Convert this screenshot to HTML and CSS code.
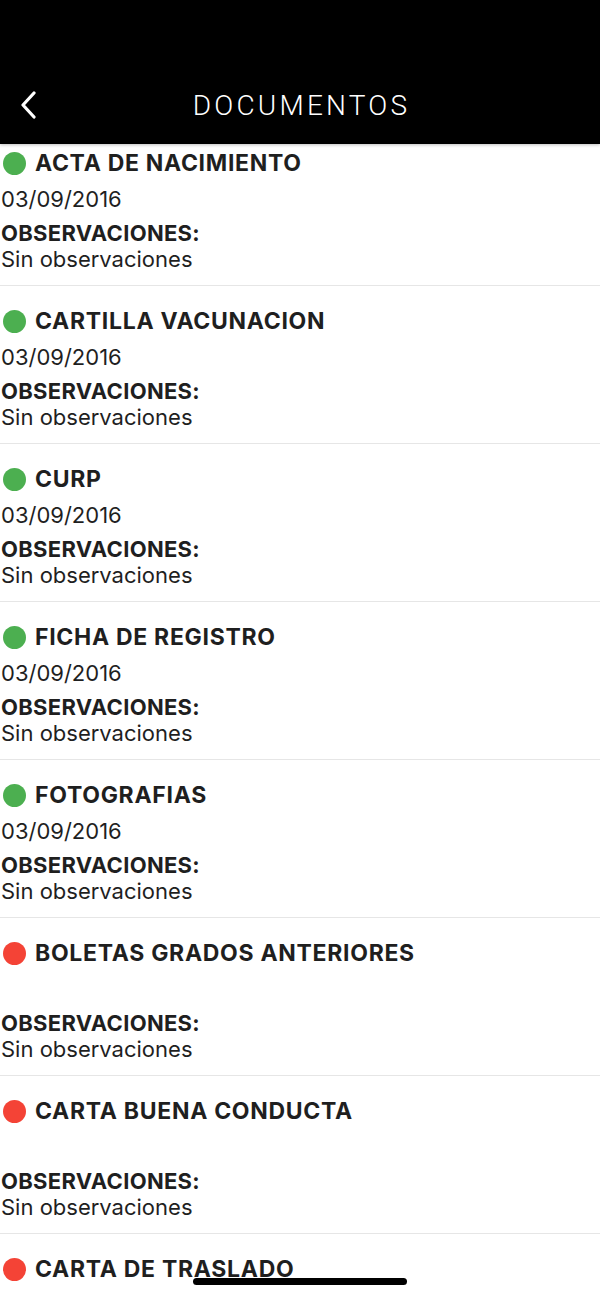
FILE: index.html
```html
<!DOCTYPE html>
<html lang="es">
<head>
    <meta charset="UTF-8">
    <meta name="viewport" content="width=device-width, initial-scale=1.0">
    <title>Documentos</title>
    <link rel="stylesheet" href="styles.css">
</head>
<body>
    <header class="topbar">
        <button class="back" aria-label="Regresar">
            <svg width="16" height="28" viewBox="0 0 16 28">
                <path d="M14 2 L3 14 L14 26" fill="none" stroke="#fff" stroke-width="3.2" stroke-linecap="round" stroke-linejoin="round"/>
            </svg>
        </button>
        <h1 class="title">DOCUMENTOS</h1>
    </header>

    <ul class="docs">
        <li class="doc">
            <div class="doc-name"><span class="dot ok"></span>ACTA DE NACIMIENTO</div>
            <div class="doc-date">03/09/2016</div>
            <div class="doc-label">OBSERVACIONES:</div>
            <div class="doc-obs">Sin observaciones</div>
        </li>
        <li class="doc">
            <div class="doc-name"><span class="dot ok"></span>CARTILLA VACUNACION</div>
            <div class="doc-date">03/09/2016</div>
            <div class="doc-label">OBSERVACIONES:</div>
            <div class="doc-obs">Sin observaciones</div>
        </li>
        <li class="doc">
            <div class="doc-name"><span class="dot ok"></span>CURP</div>
            <div class="doc-date">03/09/2016</div>
            <div class="doc-label">OBSERVACIONES:</div>
            <div class="doc-obs">Sin observaciones</div>
        </li>
        <li class="doc">
            <div class="doc-name"><span class="dot ok"></span>FICHA DE REGISTRO</div>
            <div class="doc-date">03/09/2016</div>
            <div class="doc-label">OBSERVACIONES:</div>
            <div class="doc-obs">Sin observaciones</div>
        </li>
        <li class="doc">
            <div class="doc-name"><span class="dot ok"></span>FOTOGRAFIAS</div>
            <div class="doc-date">03/09/2016</div>
            <div class="doc-label">OBSERVACIONES:</div>
            <div class="doc-obs">Sin observaciones</div>
        </li>
        <li class="doc">
            <div class="doc-name"><span class="dot missing"></span>BOLETAS GRADOS ANTERIORES</div>
            <div class="doc-date"></div>
            <div class="doc-label">OBSERVACIONES:</div>
            <div class="doc-obs">Sin observaciones</div>
        </li>
        <li class="doc">
            <div class="doc-name"><span class="dot missing"></span>CARTA BUENA CONDUCTA</div>
            <div class="doc-date"></div>
            <div class="doc-label">OBSERVACIONES:</div>
            <div class="doc-obs">Sin observaciones</div>
        </li>
        <li class="doc">
            <div class="doc-name"><span class="dot missing"></span>CARTA DE TRASLADO</div>
            <div class="doc-date"></div>
            <div class="doc-label">OBSERVACIONES:</div>
            <div class="doc-obs">Sin observaciones</div>
        </li>
    </ul>

    <div class="home-bar"></div>
</body>
</html>
```

FILE: styles.css
```css
body {
    margin: 0;
    height: 1298px;
    overflow: hidden;
    background-color: #fff;
    font-family: Inter, "Liberation Sans", sans-serif;
    color: #1f1f1f;
}

.topbar {
    position: relative;
    z-index: 2;
    height: 144px;
    background-color: #000;
    display: flex;
    align-items: flex-end;
    justify-content: center;
    box-shadow: 0 1px 3px rgba(0, 0, 0, 0.25);
}

.back {
    position: absolute;
    left: 20px;
    top: 91px;
    padding: 0;
    border: 0;
    background: none;
    line-height: 0;
}

.title {
    margin: 0 0 18px;
    padding-left: 3px;
    height: 40px;
    line-height: 40px;
    font-family: Roboto, "Noto Sans", sans-serif;
    font-weight: 300;
    font-size: 28px;
    letter-spacing: 3.2px;
    color: #fff;
}

/* list is scrolled up a little under the header */
.docs {
    list-style: none;
    margin: -15px 0 0;
    padding: 0;
}

.doc {
    height: 136px;
    padding: 21px 0 0 1px;
    border-bottom: 1px solid #e6e6e6;
}

.doc:first-child {
    padding-top: 20px;
}

.doc-name {
    display: flex;
    align-items: center;
    gap: 9px;
    height: 28px;
    font-size: 23px;
    font-weight: 700;
    letter-spacing: 0.7px;
}

.dot {
    width: 23px;
    height: 23px;
    border-radius: 50%;
    margin-left: 2px;
}

.dot.ok {
    background-color: #4caf50;
}

.dot.missing {
    background-color: #f44336;
}

.doc-date {
    height: 28px;
    margin-top: 8px;
    line-height: 28px;
    font-size: 22px;
}

.doc-label {
    height: 26px;
    margin-top: 7px;
    line-height: 26px;
    font-size: 22px;
    font-weight: 700;
    letter-spacing: 0.3px;
}

.doc-obs {
    height: 26px;
    line-height: 26px;
    font-size: 22px;
}

.home-bar {
    position: absolute;
    left: 193px;
    top: 1278px;
    width: 214px;
    height: 7px;
    border-radius: 4px;
    background-color: #000;
}
```
